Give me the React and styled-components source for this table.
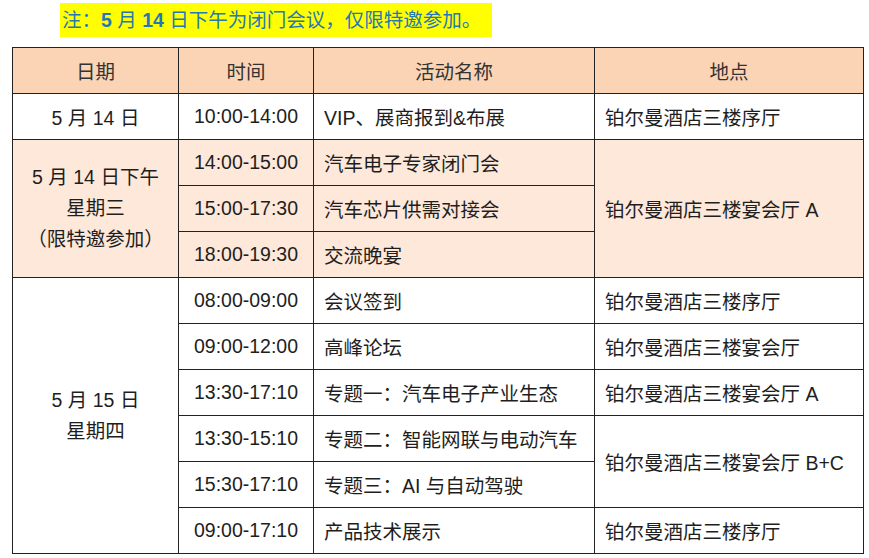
import React from "react";
import styled, { createGlobalStyle } from "styled-components";

const GlobalStyle = createGlobalStyle`
  html, body {
    margin: 0;
    padding: 0;
    background: #fff;
  }
  body {
    font-family: "Liberation Sans", "Noto Sans CJK SC", sans-serif;
    color: #222;
  }
`;

const Page = styled.div`
  width: 869px;
  height: 558px;
  padding: 3px 0 0 12px;
  box-sizing: border-box;
  overflow: hidden;
`;

const NoteLine = styled.div`
  height: 44px;
  padding-left: 48px;
`;

const Note = styled.span`
  display: inline-block;
  height: 34px;
  line-height: 34px;
  padding: 0 11px 0 2px;
  background: #ffff00;
  color: #2677b5;
  font-size: 19.5px;
  white-space: nowrap;
`;

const Strong = styled.b`
  font-weight: bold;
`;

const Table = styled.table`
  border-collapse: collapse;
  table-layout: fixed;
  width: 851px;
  font-family: "Liberation Sans", "Noto Sans CJK SC", sans-serif;
  font-size: 19.5px;
`;

const Col = styled.col`
  width: ${(p) => p.w}px;
`;

const HeadCell = styled.th`
  height: 45px;
  padding: 0;
  border: 1px solid #222;
  background: #fbd4b5;
  font-weight: normal;
  text-align: center;
  color: #333;
`;

const Row = styled.tr`
  background: ${(p) => (p.tint ? "#fde8da" : "#fff")};
`;

const Cell = styled.td`
  height: 45px;
  padding: 0;
  padding-left: ${(p) => (p.left ? "10px" : "0")};
  border: 1px solid #222;
  text-align: ${(p) => (p.left ? "left" : "center")};
  vertical-align: middle;
  line-height: ${(p) => (p.lh ? p.lh : "normal")};
  white-space: nowrap;
  color: #1e1e1e;
`;

const rows = [
  {
    tint: false,
    date: { text: ["5 月 14 日"], span: 1 },
    time: "10:00-14:00",
    name: "VIP、展商报到&布展",
    place: { text: "铂尔曼酒店三楼序厅", span: 1 },
  },
  {
    tint: true,
    date: { text: ["5 月 14 日下午", "星期三", "（限特邀参加）"], span: 3 },
    time: "14:00-15:00",
    name: "汽车电子专家闭门会",
    place: { text: "铂尔曼酒店三楼宴会厅 A", span: 3 },
  },
  { tint: true, time: "15:00-17:30", name: "汽车芯片供需对接会" },
  { tint: true, time: "18:00-19:30", name: "交流晚宴" },
  {
    tint: false,
    date: { text: ["5 月 15 日", "星期四"], span: 6 },
    time: "08:00-09:00",
    name: "会议签到",
    place: { text: "铂尔曼酒店三楼序厅", span: 1 },
  },
  {
    tint: false,
    time: "09:00-12:00",
    name: "高峰论坛",
    place: { text: "铂尔曼酒店三楼宴会厅", span: 1 },
  },
  {
    tint: false,
    time: "13:30-17:10",
    name: "专题一：汽车电子产业生态",
    place: { text: "铂尔曼酒店三楼宴会厅 A", span: 1 },
  },
  {
    tint: false,
    time: "13:30-15:10",
    name: "专题二：智能网联与电动汽车",
    place: { text: "铂尔曼酒店三楼宴会厅 B+C", span: 2 },
  },
  { tint: false, time: "15:30-17:10", name: "专题三：AI 与自动驾驶" },
  {
    tint: false,
    time: "09:00-17:10",
    name: "产品技术展示",
    place: { text: "铂尔曼酒店三楼序厅", span: 1 },
  },
];

export default function App() {
  return (
    <Page>
      <GlobalStyle />
      <NoteLine>
        <Note>
          注：<Strong>5</Strong> 月 <Strong>14</Strong> 日下午为闭门会议，仅限特邀参加。
        </Note>
      </NoteLine>
      <Table>
        <colgroup>
          <Col w={166} />
          <Col w={135} />
          <Col w={281} />
          <Col w={269} />
        </colgroup>
        <thead>
          <tr>
            <HeadCell>日期</HeadCell>
            <HeadCell>时间</HeadCell>
            <HeadCell>活动名称</HeadCell>
            <HeadCell>地点</HeadCell>
          </tr>
        </thead>
        <tbody>
          {rows.map((r, i) => (
            <Row key={i} tint={r.tint}>
              {r.date && (
                <Cell rowSpan={r.date.span} lh={r.date.text.length > 1 ? "31px" : null}>
                  {r.date.text.map((t, j) => (
                    <div key={j}>{t}</div>
                  ))}
                </Cell>
              )}
              <Cell>{r.time}</Cell>
              <Cell left>{r.name}</Cell>
              {r.place && (
                <Cell left rowSpan={r.place.span}>
                  {r.place.text}
                </Cell>
              )}
            </Row>
          ))}
        </tbody>
      </Table>
    </Page>
  );
}
